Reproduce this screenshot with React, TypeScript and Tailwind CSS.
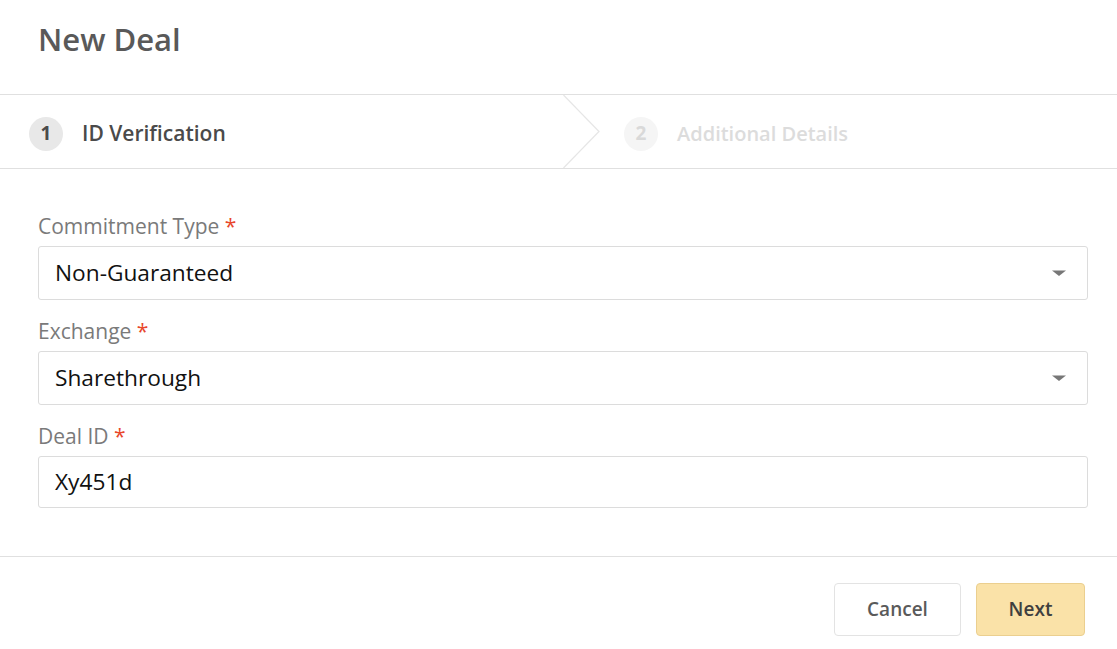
import React from "react";

function Caret() {
  return (
    <svg width="16" height="8" viewBox="0 0 16 8" className="shrink-0">
      <path d="M1 1.5 L15 1.5 L8 7 Z" fill="#777777" />
    </svg>
  );
}

function Label({ text }: { text: string }) {
  return (
    <div className="h-[28px] leading-[28px] text-[21px] text-[#7a7a7a] mb-[6px]">
      {text} <span className="text-[#e8472b]">*</span>
    </div>
  );
}

export default function App() {
  return (
    <div
      className="w-[1117px] h-[649px] bg-white overflow-hidden"
      style={{ fontFamily: "'Open Sans', 'Noto Sans', sans-serif" }}
    >
      <div className="h-[95px] border-b border-[#e0e0e0] flex items-center pl-[38px]">
        <h1 className="text-[31px] font-semibold text-[#595959] -mt-[15px]">New Deal</h1>
      </div>

      <div className="h-[74px] border-b border-[#e0e0e0] flex items-stretch">
        <div className="w-[563px] flex items-center pl-[29px] pt-[4px]">
          <div className="w-[34px] h-[34px] rounded-full bg-[#e8e8e8] flex items-center justify-center text-[19px] font-bold text-[#4a4a4a]">
            1
          </div>
          <span className="ml-[19px] text-[21px] font-semibold text-[#4a4a4a]">ID Verification</span>
        </div>
        <svg width="37" height="73" viewBox="0 0 37 73" className="shrink-0 self-center">
          <path d="M0.5 0 L36 36.5 L0.5 73" fill="none" stroke="#e6e6e6" strokeWidth="1.2" />
        </svg>
        <div className="flex items-center ml-[24px] pt-[4px]">
          <div className="w-[34px] h-[34px] rounded-full bg-[#f5f5f5] flex items-center justify-center text-[19px] font-bold text-[#d9d9d9]">
            2
          </div>
          <span className="ml-[19px] text-[20px] font-semibold text-[#dcdcdc]">Additional Details</span>
        </div>
      </div>

      <div className="px-[38px] pt-[43px] pb-[48px] border-b border-[#e0e0e0]">
        <div className="w-[1050px]">
          <Label text="Commitment Type" />
          <div className="h-[54px] border border-[#dcdcdc] rounded-[3px] flex items-center justify-between pl-[16px] pr-[20px] text-[22.7px] text-[#111111]">
            <span>Non-Guaranteed</span>
            <Caret />
          </div>
          <div className="h-[17px]" />
          <Label text="Exchange" />
          <div className="h-[54px] border border-[#dcdcdc] rounded-[3px] flex items-center justify-between pl-[16px] pr-[20px] text-[22.7px] text-[#111111]">
            <span>Sharethrough</span>
            <Caret />
          </div>
          <div className="h-[17px]" />
          <Label text="Deal ID" />
          <div className="h-[52px] border border-[#dcdcdc] rounded-[3px] flex items-center pl-[16px] text-[22.7px] text-[#111111]">
            <span>Xy451d</span>
          </div>
        </div>
      </div>

      <div className="flex justify-end pt-[26px] pr-[32px] gap-[15px]">
        <button className="w-[127px] h-[53px] border border-[#e3e3e3] rounded-[4px] bg-white text-[19px] font-semibold text-[#5a5a5a]">
          Cancel
        </button>
        <button className="w-[109px] h-[53px] border border-[#ebcf8f] rounded-[4px] bg-[#fae2a8] text-[19px] font-semibold text-[#3f3f3f]">
          Next
        </button>
      </div>
    </div>
  );
}
